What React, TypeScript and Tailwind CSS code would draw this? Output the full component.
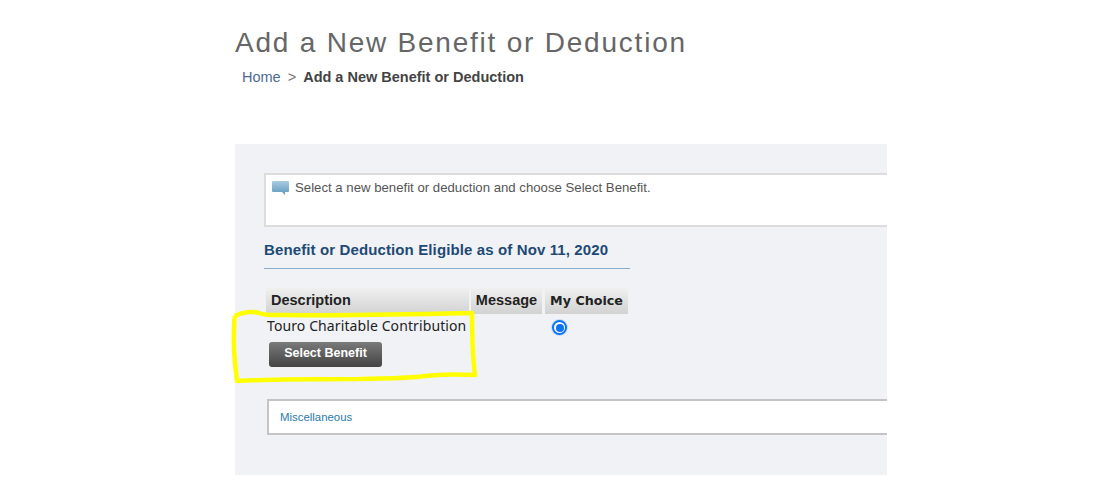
export default function App() {
  return (
    <div className="relative h-[492px] w-[1096px] overflow-hidden bg-white font-['Liberation_Sans',Arial,sans-serif]">
      <div className="ml-[235px] w-[652px]">
        <h1 className="pt-[27px] text-[28px] leading-[32px] font-normal tracking-[1.78px] text-[#666666]">
          Add a New Benefit or Deduction
        </h1>
        <div className="mt-[2px] ml-[7px] flex items-center text-[14.5px] leading-[32px] text-[#444444]">
          <span className="text-[#4d6a94]">Home</span>
          <span className="mx-[7px] text-[#777777]">&gt;</span>
          <span className="font-bold">Add a New Benefit or Deduction</span>
        </div>

        <div className="mt-[51px] h-[331px] overflow-hidden bg-[#f1f2f6] pt-[29px] pl-[29px]">
          <div className="flex h-[54px] w-[640px] items-start border-2 border-r-0 border-[#dcdcdc] bg-white pt-[5px] pl-[6px]">
            <svg width="17" height="15" viewBox="0 0 17 15" className="mt-[1px] shrink-0">
              <defs>
                <linearGradient id="bubble" x1="0" y1="0" x2="0" y2="1">
                  <stop offset="0" stopColor="#a9cce3" />
                  <stop offset="1" stopColor="#5f97bd" />
                </linearGradient>
              </defs>
              <path d="M1 0h15a1 1 0 0 1 1 1v9a1 1 0 0 1-1 1h-3v3l-3-3H1a1 1 0 0 1-1-1V1a1 1 0 0 1 1-1z" fill="url(#bubble)" />
            </svg>
            <p className="ml-[6px] text-[13.2px] leading-[16px] text-[#555555]">
              Select a new benefit or deduction and choose Select Benefit.
            </p>
          </div>

          <h2 className="mt-[14px] w-[366px] text-[15px] leading-[18px] font-bold tracking-[0.12px] text-[#1d4a75]">
            Benefit or Deduction Eligible as of Nov 11, 2020
          </h2>
          <div className="mt-[9px] h-px w-[366px] bg-[#86abcc]" />

          <div className="mt-[19px] ml-[2px] flex w-[362px] gap-[2px]">
            <div className="w-[203px]">
              <div className="flex h-[26px] items-center bg-gradient-to-b from-[#f0f0f0] to-[#d2d2d2] pl-[5px] text-[14.5px] font-bold text-[#222222]">
                Description
              </div>
              <div className="pt-[3px] pl-[1px] font-['Noto_Sans','Open_Sans',sans-serif] text-[14px] leading-[18px] tracking-[0.1px] whitespace-nowrap text-[#222222]">
                Touro Charitable Contribution
              </div>
              <button className="mt-[7px] ml-[3px] block h-[25px] w-[113px] rounded-[3px] bg-gradient-to-b from-[#7a7a7a] to-[#444444] pb-[3px] text-center text-[12.5px] font-bold text-white">
                Select Benefit
              </button>
            </div>
            <div className="w-[71px]">
              <div className="flex h-[26px] items-center justify-center bg-gradient-to-b from-[#f0f0f0] to-[#d2d2d2] text-[14.5px] font-bold text-[#222222]">
                Message
              </div>
            </div>
            <div className="ml-px w-[83px]">
              <div className="flex h-[26px] items-center justify-center bg-gradient-to-b from-[#f0f0f0] to-[#d2d2d2] font-['DejaVu_Sans',sans-serif] text-[12.7px] font-bold text-[#222222]">
                My Choice
              </div>
              <div className="mt-[6px] ml-[7px] flex h-[15px] w-[15px] items-center justify-center rounded-full border-2 border-[#0a74f5] bg-white shadow-[0_0_0_1px_#c5dcf8]">
                <div className="h-[8px] w-[8px] rounded-full bg-[#0a74f5]" />
              </div>
            </div>
          </div>

          <div className="mt-[32px] ml-[3px] flex h-[36px] w-[640px] items-center border-2 border-r-0 border-[#c4c4c4] bg-white pt-[2px] pl-[11px] text-[11.4px] text-[#2a7ab0]">
            Miscellaneous
          </div>
        </div>
      </div>

      {/* hand drawn highlight over the first row */}
      <svg width="1096" height="492" className="pointer-events-none absolute top-0 left-0">
        <path
          d="M235 316 C242 312 252 311 259 313 C264 315 268 315 285 315 C340 316 420 314 472 313 C472 335 472 352 475 375 C455 374 440 374 425 376 C400 379 385 378 358 379 C320 379 280 379 237 381 C235 365 233 345 234 330 C234 325 234 320 235 316"
          fill="none"
          stroke="#ffff00"
          strokeWidth="4.5"
          strokeLinejoin="round"
        />
      </svg>
    </div>
  );
}
